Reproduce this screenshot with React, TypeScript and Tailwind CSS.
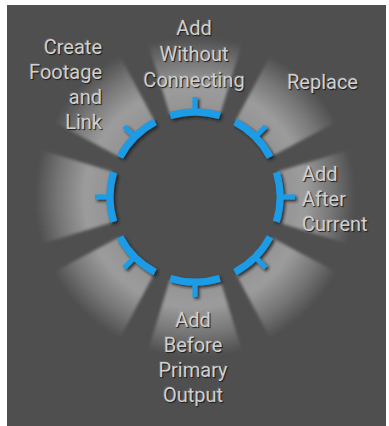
import React from 'react';

// ring centre and radius, in panel coordinates
const CX = 188;
const CY = 192;
const R = 85;
const HALF = 17; // half the angular width of each segment, degrees

const pt = (r: number, deg: number) => {
  const a = (deg * Math.PI) / 180;
  return [CX + r * Math.sin(a), CY - r * Math.cos(a)];
};

const angles = [0, 45, 90, 135, 180, 225, 270, 315];

function beamPath(deg: number) {
  const r0 = R + 2;
  const r1 = 172;
  const [x1, y1] = pt(r0, deg - HALF);
  const [x2, y2] = pt(r0, deg + HALF);
  const [x3, y3] = pt(r1, deg + HALF);
  const [x4, y4] = pt(r1, deg - HALF);
  return `M${x1} ${y1} A${r0} ${r0} 0 0 1 ${x2} ${y2} L${x3} ${y3} A${r1} ${r1} 0 0 0 ${x4} ${y4} Z`;
}

function arcPath(deg: number) {
  const [x1, y1] = pt(R, deg - HALF);
  const [x2, y2] = pt(R, deg + HALF);
  return `M${x1} ${y1} A${R} ${R} 0 0 1 ${x2} ${y2}`;
}

function Ring() {
  return (
    <svg width={379} height={421} className="block">
      <defs>
        <radialGradient id="beam" gradientUnits="userSpaceOnUse" cx={CX} cy={CY} r={172}>
          <stop offset="0.5" stopColor="#939393" />
          <stop offset="0.64" stopColor="#9c9c9c" />
          <stop offset="0.8" stopColor="#757575" />
          <stop offset="0.93" stopColor="#4f4f4f" />
        </radialGradient>
        <filter id="soft" x="-20%" y="-20%" width="140%" height="140%">
          <feGaussianBlur stdDeviation="1.5" />
        </filter>
        <filter id="shade" x="-30%" y="-30%" width="160%" height="160%">
          <feDropShadow dx="2" dy="2" stdDeviation="1.5" floodColor="#1c1c1c" floodOpacity="0.8" />
        </filter>
      </defs>
      <g filter="url(#soft)">
        {angles.map((a) => (
          <path key={a} d={beamPath(a)} fill="url(#beam)" />
        ))}
      </g>
      <g filter="url(#shade)" stroke="#1b9ce6" fill="none">
        {angles.map((a) => {
          const [tx1, ty1] = pt(R, a);
          const [tx2, ty2] = pt(R + 15, a);
          return (
            <g key={a}>
              <path d={arcPath(a)} strokeWidth={7} />
              <line x1={tx1} y1={ty1} x2={tx2} y2={ty2} strokeWidth={5} />
            </g>
          );
        })}
      </g>
    </svg>
  );
}

// labels sit on the radial canvas, each next to its segment
const label =
  "absolute text-[20px] leading-[25px] text-[#d0d0d0] whitespace-nowrap [font-family:Roboto,'Liberation_Sans',sans-serif] [text-shadow:1px_1px_1px_#1a1a1a,-1px_-1px_0_rgba(255,255,255,0.12)]";

export default function App() {
  return (
    <div className="w-[389px] h-[426px] bg-white pt-[5px] pl-[7px] pr-[3px]">
      <div className="relative h-[421px] bg-[#4f4f4f] overflow-hidden">
        <Ring />
        <div className={`${label} left-[187px] top-[10px] -translate-x-1/2 text-center leading-[26px]`}>
          Add<br />Without<br />Connecting
        </div>
        <div className={`${label} right-[284px] top-[30px] text-right leading-[24.5px]`}>
          Create<br />Footage<br />and<br />Link
        </div>
        <div className={`${label} left-[280px] top-[65px]`}>Replace</div>
        <div className={`${label} left-[295px] top-[157px]`}>
          Add<br />After<br />Current
        </div>
        <div className={`${label} left-[186px] top-[303px] -translate-x-1/2 text-center leading-[24.7px]`}>
          Add<br />Before<br />Primary<br />Output
        </div>
      </div>
    </div>
  );
}
